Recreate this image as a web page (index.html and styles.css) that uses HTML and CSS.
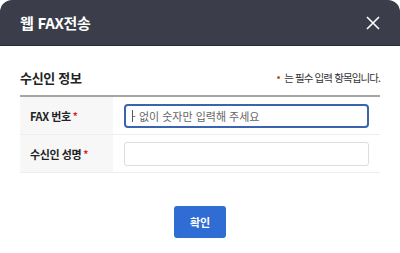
FILE: index.html
```html
<!DOCTYPE html>
<html lang="ko">
<head>
<meta charset="utf-8">
<link rel="stylesheet" href="styles.css">
</head>
<body>
<div class="modal">
  <div class="head">
    <h1 class="title">웹 FAX전송</h1>
    <button class="close" aria-label="닫기">
      <svg width="14" height="14" viewBox="0 0 14 14"><path d="M1 1L13 13M13 1L1 13" stroke="#fff" stroke-width="1.6" fill="none"/></svg>
    </button>
  </div>
  <div class="body">
    <div class="section-head">
      <h2 class="section-title">수신인 정보</h2>
      <p class="legend"><span class="dot"></span>는 필수 입력 항목입니다.</p>
    </div>
    <div class="row">
      <div class="label">FAX 번호<span class="req">*</span></div>
      <div class="field"><input class="input focused" type="text" placeholder="- 없이 숫자만 입력해 주세요"><span class="caret"></span></div>
    </div>
    <div class="row">
      <div class="label">수신인 성명<span class="req">*</span></div>
      <div class="field"><input class="input" type="text"></div>
    </div>
    <div class="actions">
      <button class="btn">확인</button>
    </div>
  </div>
</div>
</body>
</html>
```
FILE: styles.css
```css
* { box-sizing: border-box; }
html, body { margin: 0; padding: 0; background: #fff; }
body { font-family: "Noto Sans CJK KR", "Noto Sans", sans-serif; color: #222; }
.modal { width: 400px; height: 253px; overflow: hidden; border-radius: 12px 12px 0 0; background: #fff; }
.head { height: 46px; background: #3b3d4a; border-bottom: 1px solid #2b2c35; display: flex; align-items: center; justify-content: space-between; padding: 0 20px 0 20px; }
.title { margin: 0; font-size: 15px; font-weight: 700; color: #fff; letter-spacing: -0.3px; }
.close { background: none; border: 0; padding: 0; width: 16px; height: 16px; display: flex; align-items: center; justify-content: center; margin-right: -1px; }
.body { padding: 0 20px; }
.section-head { height: 51px; padding-top: 13px; display: flex; align-items: center; justify-content: space-between; border-bottom: 2px solid #a5a5a5; }
.section-title { margin: 0; font-size: 13px; font-weight: 700; color: #222; letter-spacing: -0.3px; }
.legend { margin: 0; font-size: 10.5px; color: #333; letter-spacing: -0.9px; display: flex; align-items: center; }
.dot { width: 3px; height: 3px; border-radius: 50%; background: #c0601a; margin-right: 4px; }
.row { display: flex; height: 38px; border-bottom: 1px solid #eee; }
.label { width: 93px; background: #f7f7f7; padding-left: 10px; display: flex; align-items: center; font-size: 11px; font-weight: 700; color: #222; letter-spacing: -0.4px; }
.req { color: #e02020; margin-left: 2px; font-size: 10px; }
.field { flex: 1; display: flex; align-items: center; padding: 0 11px; position: relative; }
.input { width: 100%; height: 24px; border: 1px solid #ddd; border-radius: 3px; font-family: inherit; font-size: 11px; padding: 0 6px; color: #333; outline: none; }
.input.focused { border: 2px solid #3a64b0; border-radius: 4px; padding-left: 6px; }
.input::placeholder { color: #666; }
.actions { display: flex; justify-content: center; padding-top: 33px; }
.btn { width: 52px; height: 32px; border: 0; border-radius: 3px; background: #2f6cd3; color: #fff; font-family: inherit; font-size: 11px; font-weight: 700; }
.caret { position: absolute; left: 19px; top: 13px; width: 1px; height: 12px; background: #555; }
```
